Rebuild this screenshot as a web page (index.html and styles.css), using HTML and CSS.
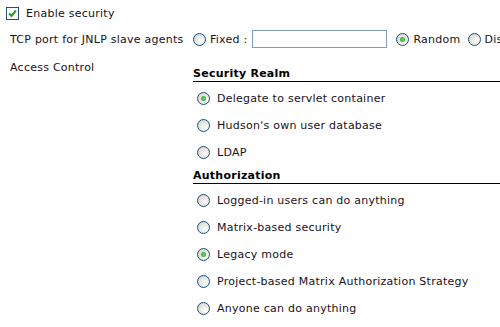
FILE: index.html
```html
<!DOCTYPE html>
<html lang="en">
<head>
  <meta charset="UTF-8" />
  <title>Configure System</title>
  <link rel="stylesheet" href="styles.css">
</head>
<body>
  <!-- Enable security -->
  <div class="check-row">
    <span class="checkbox checked">
      <svg viewBox="0 0 9 9" width="9" height="9"><path d="M1 4.5 L3.5 7 L8 1.5" fill="none" stroke="#21a121" stroke-width="2"/></svg>
    </span>
    <span>Enable security</span>
  </div>

  <div class="config">
    <!-- TCP port -->
    <div class="label">TCP port for JNLP slave agents</div>
    <div class="port-row">
      <span class="radio"></span><span class="opt-text">Fixed :</span>
      <input type="text" class="port-input">
      <span class="radio checked"></span><span class="opt-text opt-random">Random</span>
      <span class="radio"></span><span class="opt-text">Disable</span>
    </div>

    <!-- Access control -->
    <div class="label label-top">Access Control</div>
    <div class="access">
      <div class="section-head">Security Realm</div>
      <div class="option"><span class="radio checked"></span>Delegate to servlet container</div>
      <div class="option"><span class="radio"></span>Hudson's own user database</div>
      <div class="option"><span class="radio"></span>LDAP</div>

      <div class="section-head section-next">Authorization</div>
      <div class="option"><span class="radio"></span>Logged-in users can do anything</div>
      <div class="option"><span class="radio"></span>Matrix-based security</div>
      <div class="option"><span class="radio checked"></span>Legacy mode</div>
      <div class="option"><span class="radio"></span>Project-based Matrix Authorization Strategy</div>
      <div class="option"><span class="radio"></span>Anyone can do anything</div>
    </div>
  </div>
</body>
</html>
```

FILE: styles.css
```css
body {
  margin: 0;
  padding: 0;
  width: 620px;
  font-family: "DejaVu Sans", Verdana, sans-serif;
  font-size: 11px;
  letter-spacing: 0.25px;
  color: #1a1020;
  background: #fff;
  white-space: nowrap;
  overflow: hidden;
}

.check-row {
  display: flex;
  align-items: center;
  gap: 7px;
  padding: 7px 0 0 6px;
  height: 13px;
}

.checkbox {
  width: 11px;
  height: 11px;
  border: 1px solid #1c5180;
  background: #fff;
  display: flex;
  align-items: center;
  justify-content: center;
}

.config {
  display: grid;
  grid-template-columns: 193px 1fr;
  margin-top: 9px;
}

.label {
  padding-left: 10px;
  display: flex;
  align-items: center;
}

.label-top {
  align-items: flex-start;
  padding-top: 12px;
}

.port-row {
  display: flex;
  align-items: center;
  height: 20px;
}

.radio {
  width: 11px;
  height: 11px;
  border: 1px solid #1c5180;
  border-radius: 50%;
  background: radial-gradient(circle at 65% 65%, #fff 0%, #dcdcd5 70%, #cfcfc8 100%);
  position: relative;
  flex: none;
}

.radio.checked::after {
  content: '';
  position: absolute;
  left: 3px;
  top: 3px;
  width: 5px;
  height: 5px;
  border-radius: 50%;
  background: radial-gradient(circle, #6fd16f 0%, #21a121 100%);
}

.opt-text {
  margin-left: 4px;
}

.opt-random {
  margin-right: 7px;
}

.port-input {
  box-sizing: border-box;
  width: 135px;
  height: 18px;
  margin: 0 9px 0 5px;
  padding: 1px;
  border: 1px solid #7f9db9;
  font: inherit;
}

.access {
  padding-top: 18px;
}

.section-head {
  font-weight: bold;
  border-bottom: 1px solid #000;
  padding-bottom: 1px;
  margin-bottom: 3px;
  color: #000;
}

.section-next {
  margin-top: 3px;
}

.option {
  display: flex;
  align-items: center;
  gap: 7px;
  height: 27px;
  padding-left: 4px;
}
```
